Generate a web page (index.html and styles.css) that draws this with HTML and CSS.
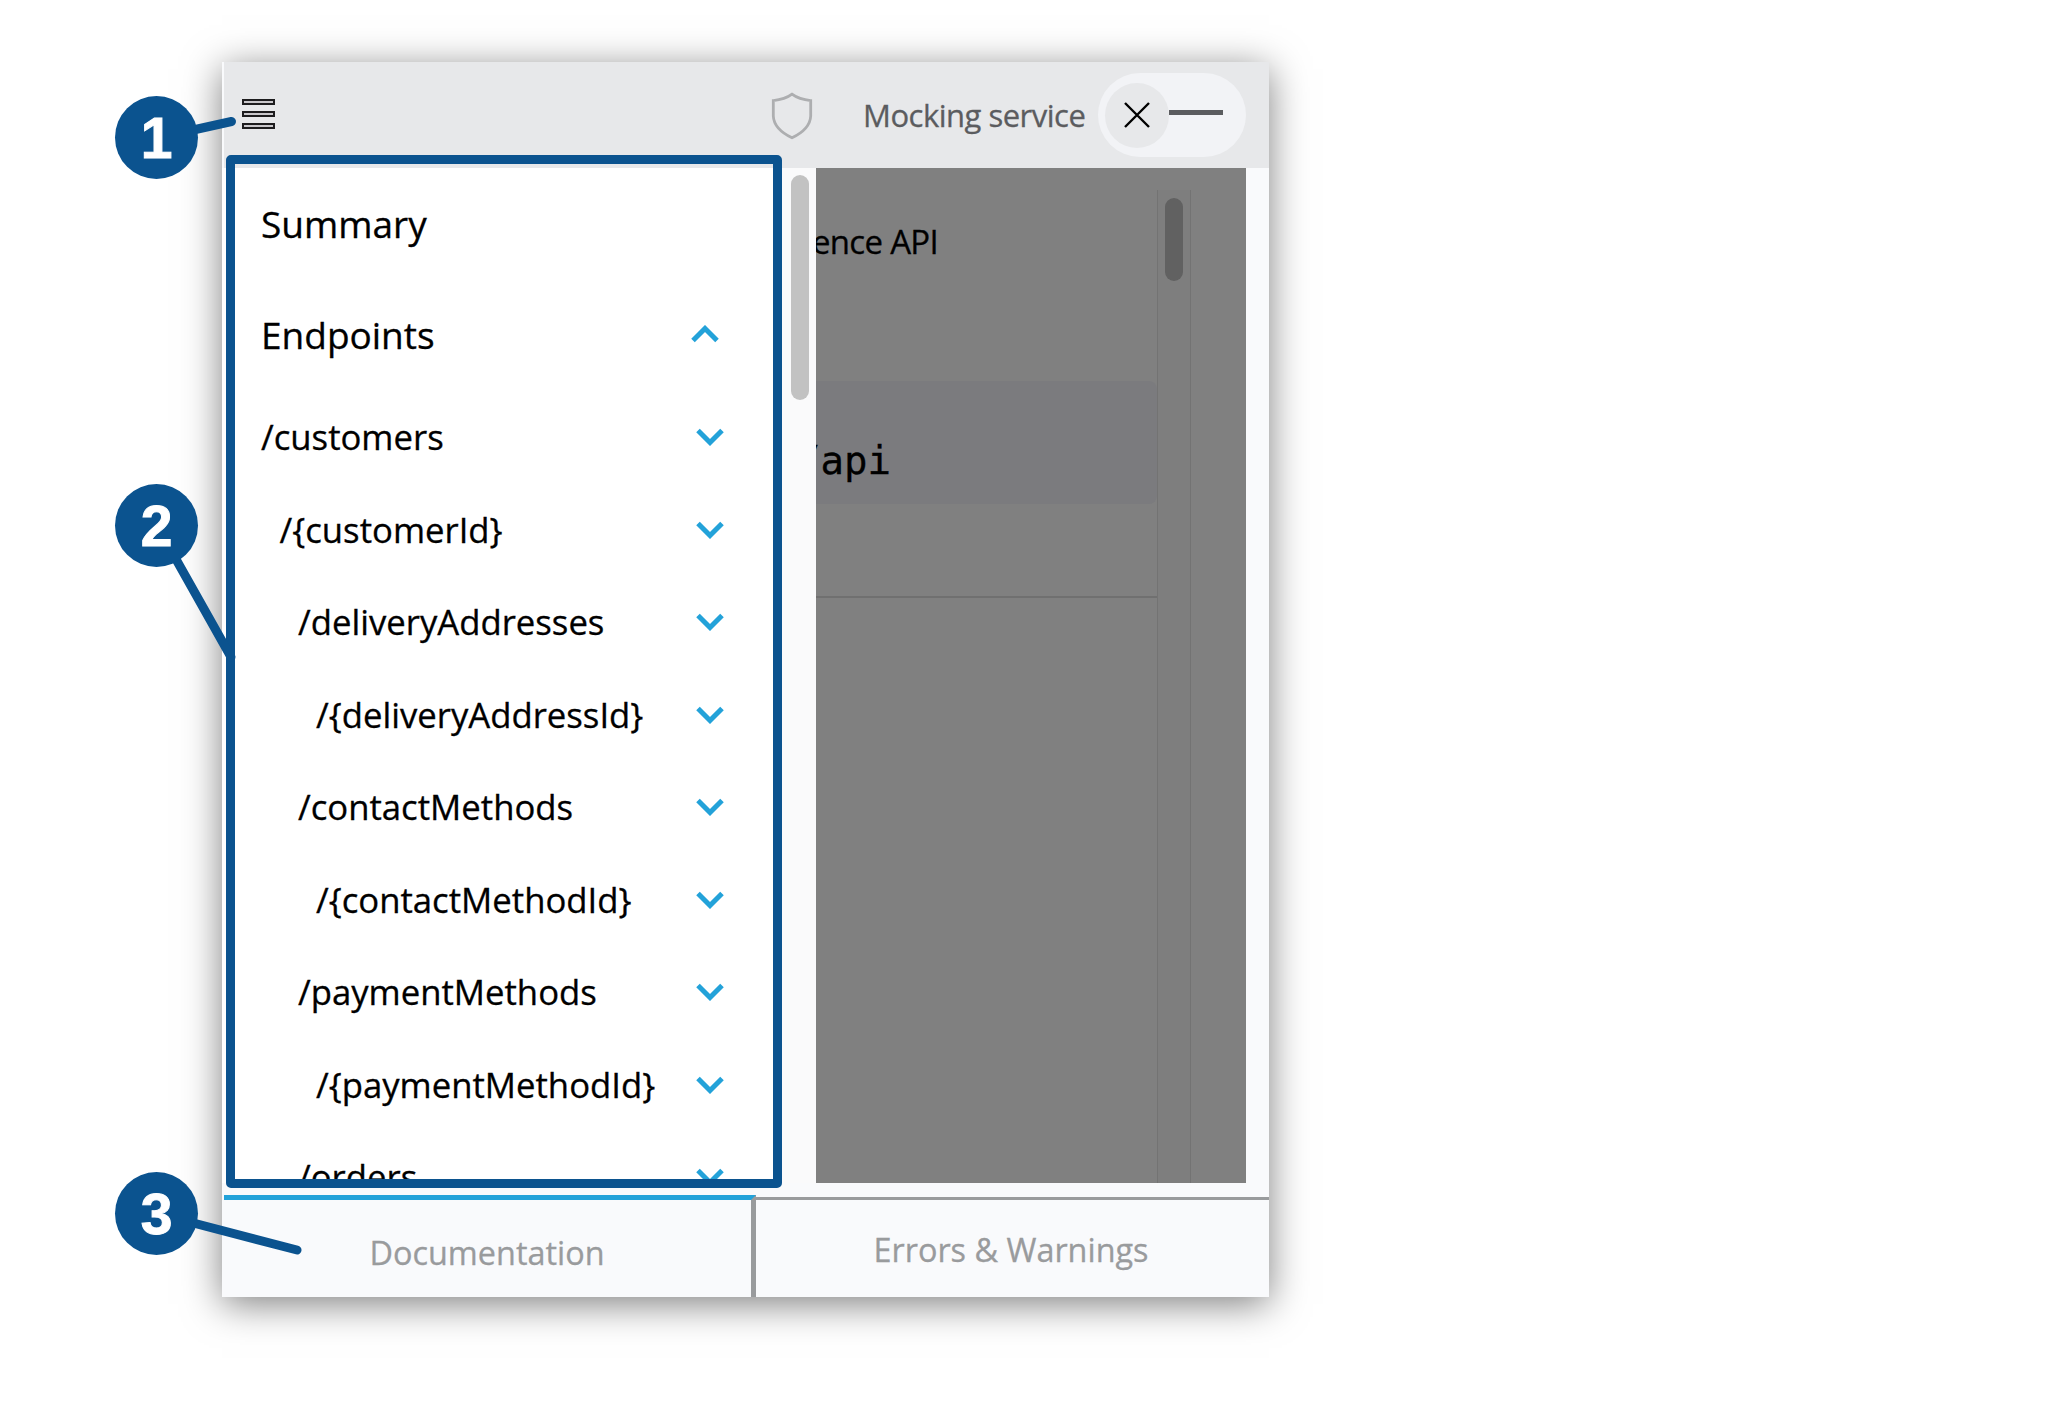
FILE: index.html
```html
<!DOCTYPE html>
<html lang="en">
<head>
<meta charset="utf-8">
<title>API documentation panel</title>
<link rel="stylesheet" href="styles.css">
</head>
<body>
<svg class="defs" width="0" height="0">
  <symbol id="chevron" viewBox="0 0 28 18"><path d="M2 2.5 14 14.5 26 2.5" fill="none" stroke="#23a2d9" stroke-width="5"/></symbol>
</svg>
<main class="panel">
  <header class="topbar">
    <button class="menu" aria-label="Menu"><span></span><span></span><span></span></button>
    <div class="mocking">
      <svg class="shield" viewBox="0 0 42 48"><path d="M21 2.2C16 6 9 8 2.3 8.6V24C2.8 35 11 41 21 45.8 31 41 39.2 35 39.7 24V8.6C33 8 26 6 21 2.2Z" fill="none" stroke="#adaeb0" stroke-width="2.8"/></svg>
      <span class="mocking-label">Mocking service</span>
      <div class="toggle">
        <span class="knob"><svg width="26" height="26" viewBox="0 0 26 26"><path d="M1 1 25 25M25 1 1 25" stroke="#000" stroke-width="2.4" fill="none"/></svg></span>
        <span class="dash"></span>
      </div>
    </div>
  </header>
  <div class="body">
    <nav class="nav">
      <div class="item head summary"><span>Summary</span></div>
      <div class="item head endpoints"><span>Endpoints</span><svg class="chev up"><use href="#chevron"/></svg></div>
      <div class="item"><span>/customers</span><svg class="chev"><use href="#chevron"/></svg></div>
      <div class="item l1"><span>/{customerId}</span><svg class="chev"><use href="#chevron"/></svg></div>
      <div class="item l2"><span>/deliveryAddresses</span><svg class="chev"><use href="#chevron"/></svg></div>
      <div class="item l3"><span>/{deliveryAddressId}</span><svg class="chev"><use href="#chevron"/></svg></div>
      <div class="item l2"><span>/contactMethods</span><svg class="chev"><use href="#chevron"/></svg></div>
      <div class="item l3"><span>/{contactMethodId}</span><svg class="chev"><use href="#chevron"/></svg></div>
      <div class="item l2"><span>/paymentMethods</span><svg class="chev"><use href="#chevron"/></svg></div>
      <div class="item l3"><span>/{paymentMethodId}</span><svg class="chev"><use href="#chevron"/></svg></div>
      <div class="item l2"><span>/orders</span><svg class="chev"><use href="#chevron"/></svg></div>
    </nav>
    <div class="nav-scroll"><span class="nav-thumb"></span></div>
    <section class="content">
      <div class="doc">
        <div class="title"><span>ence API</span></div>
        <div class="code"><span>/api</span></div>
        <div class="rule"></div>
      </div>
      <div class="track"><span class="track-thumb"></span></div>
    </section>
  </div>
  <footer class="tabs">
    <div class="tab active">Documentation</div>
    <div class="tab">Errors &amp; Warnings</div>
  </footer>
</main>
<div class="highlight"></div>
<svg class="leaders" width="2048" height="1412"><g stroke="#0b538f" stroke-width="9" stroke-linecap="round"><path d="M157 138 231.5 121.5"/><path d="M157 525.5 231 657"/><path d="M157 1213.5 297 1250"/></g></svg>
<div class="badge b1">1</div>
<div class="badge b2">2</div>
<div class="badge b3">3</div>
</body>
</html>
```
FILE: styles.css
```css
* { box-sizing: border-box; }
body {
  margin: 0;
  width: 2048px;
  height: 1412px;
  overflow: hidden;
  background: #fff;
  font-family: "Open Sans", "Noto Sans", sans-serif;
  -webkit-text-stroke: .3px;
  color: #000;
}
.defs { position: absolute; }
.panel {
  display: flex;
  flex-direction: column;
  width: 1047px;
  height: 1235px;
  margin: 62px 0 0 222px;
  background: #f9fafc;
  box-shadow: 0 7px 36px rgba(0, 0, 0, .5);
}
.topbar {
  display: flex;
  align-items: flex-start;
  justify-content: space-between;
  height: 106px;
  padding: 11px 23px 0 18px;
  margin-left: 2px;
  background: #e7e8ea;
}
.menu {
  display: flex;
  flex-direction: column;
  gap: 6px;
  width: 33px;
  margin: 26px 0 0;
  padding: 0;
  border: 0;
  background: none;
}
.menu span {
  height: 6px;
  width: 33px;
  border: 2px solid #1d1c1e;
  background: #c9c7cb;
}
.mocking { display: flex; align-items: flex-start; }
.shield { width: 42px; height: 48px; margin: 19px 50px 0 0; }
.mocking-label {
  width: 220px;
  margin: 20px 15px 0 0;
  font-size: 31px;
  letter-spacing: -.5px;
  line-height: 44px;
  color: #5b5c5f;
  white-space: nowrap;
}
.toggle {
  display: flex;
  align-items: center;
  width: 148px;
  height: 84px;
  padding-left: 7px;
  border-radius: 42px;
  background: #f2f3f6;
}
.knob {
  display: flex;
  align-items: center;
  justify-content: center;
  width: 64px;
  height: 65px;
  border-radius: 50%;
  background: #e7e8ea;
}
.dash { width: 54px; height: 5px; margin-top: -5px; background: #5b5c5f; }
.body { display: flex; height: 1015px; }
.nav {
  width: 560px;
  height: 1015px;
  overflow: hidden;
  background: #fff;
  padding-left: 39px;
}
.item {
  display: flex;
  align-items: center;
  justify-content: space-between;
  height: 92.5px;
  padding-right: 58px;
  font-size: 34.7px;
  white-space: nowrap;
}
.item .chev { margin-top: 1px; }
.head { font-size: 37px; }
.summary { height: 110px; }
.endpoints { height: 112.5px; padding-right: 63px; }
.item .up { margin-top: -1px; }
.l1 { padding-left: 18.5px; }
.l2 { padding-left: 37px; }
.l3 { padding-left: 55px; }
.chev { width: 28px; height: 18px; flex: none; }
.up { transform: rotate(180deg); }
.nav-scroll {
  width: 34px;
  padding: 7px 0 0 9px;
  background: #fafafb;
}
.nav-thumb { display: block; width: 18px; height: 225px; border-radius: 9px; background: #c2c2c2; }
.content {
  display: flex;
  width: 430px;
  overflow: hidden;
  background: #808080;
}
.doc { width: 341px; }
.title { height: 213px; padding-top: 51px; font-size: 33px; letter-spacing: -.7px; line-height: 46px; white-space: nowrap; }
.title span { margin-left: -4px; }
.code {
  display: flex;
  align-items: center;
  height: 123px;
  border-radius: 0 8px 8px 0;
  background: #7b7b7e;
  overflow: hidden;
  padding-top: 36px;
  font-family: "DejaVu Sans Mono", monospace;
  font-size: 39px;
}
.code span { margin-left: -19px; }
.rule { height: 94px; border-bottom: 2px solid #707070; }
.track {
  width: 34px;
  height: 993px;
  margin-top: 22px;
  padding: 8px 0 0 7px;
  border: solid #737373;
  border-width: 0 1px;
  background: #7e7e7e;
}
.track-thumb { display: block; width: 18px; height: 83px; border-radius: 9px; background: #616161; }
.tabs { display: flex; height: 102px; margin: 12px 0 0 2px; font-size: 32.4px; color: #999b9d; }
.tab {
  flex: 1;
  display: flex;
  align-items: center;
  justify-content: center;
  margin-top: 2px;
  padding-right: 3px;
  border-top: 3px solid #999b9d;
}
.active {
  flex: 0 0 532px;
  margin: 0;
  padding: 6px 1px 0 0;
  border-top: 5px solid #23a2d9;
  border-right: 5px solid #999b9d;
}
.highlight {
  position: absolute;
  left: 226px;
  top: 155px;
  width: 556px;
  height: 1033px;
  border: 9px solid #0b538f;
  border-radius: 5px;
}
.leaders { position: absolute; left: 0; top: 0; }
.badge {
  position: absolute;
  left: 115px;
  width: 83px;
  height: 83px;
  border-radius: 50%;
  background: #0b538f;
  color: #fff;
  -webkit-text-stroke: 1px;
  font: bold 57px/85px "Liberation Sans", Arial, sans-serif;
  text-align: center;
}
.b1 { top: 96px; }
.b2 { top: 484px; }
.b3 { top: 1172px; }
```
